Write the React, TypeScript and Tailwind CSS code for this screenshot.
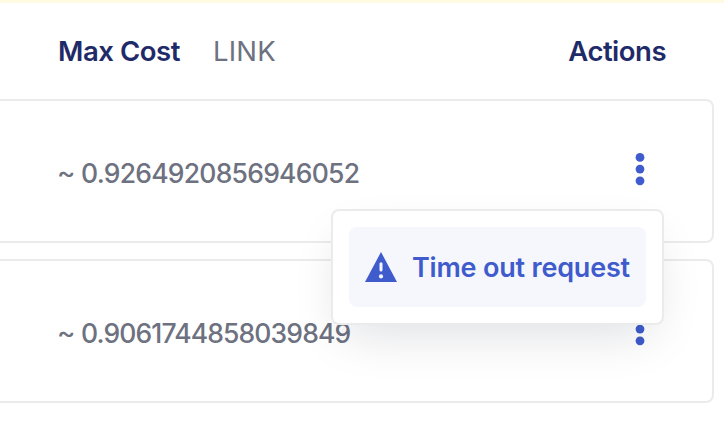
function Dots() {
  return (
    <svg width="10" height="33" viewBox="0 0 10 33" className="mb-1 shrink-0" fill="#3f5bcc">
      <circle cx="5" cy="4.4" r="4.4" />
      <circle cx="5" cy="16.1" r="4.4" />
      <circle cx="5" cy="27.8" r="4.4" />
    </svg>
  );
}

function Menu() {
  return (
    <div className="absolute top-[108px] right-[48px] z-10 h-[116px] w-[333px] rounded-lg border-2 border-[#ebebeb] bg-white p-4 shadow-[0_20px_50px_-12px_rgba(10,20,40,0.14)]">
      <button className="flex h-20 w-[297px] items-center rounded-lg bg-[#f5f7fd] pl-4 text-[#3f5bcc]">
        <svg width="32" height="30" viewBox="0 0 32 30" className="mr-[15px] shrink-0">
          <path d="M16 0 32 30H0Z" fill="#3f5bcc" />
          <rect x="14.5" y="10.2" width="3" height="9.3" rx="1.5" fill="#f5f7fd" />
          <circle cx="16" cy="24.4" r="2.1" fill="#f5f7fd" />
        </svg>
        <span className="pt-0.5 text-[27px] leading-8 font-semibold tracking-[-0.2px] whitespace-nowrap">
          Time out request
        </span>
      </button>
    </div>
  );
}

function Row({ cost, tracking, open = false }: { cost: string; tracking: string; open?: boolean }) {
  return (
    <div className="relative flex h-36 w-[714px] items-center justify-between rounded-r-lg border-2 border-l-0 border-[#ebebeb] pr-[67px] pl-[57px]">
      <div className="flex pt-[3px] text-[26.5px] leading-8 font-medium text-[#6d7180]">
        <span className="w-6 origin-left scale-x-115 text-[24px]">~</span>
        <span className={tracking}>{cost}</span>
      </div>
      <Dots />
      {open && <Menu />}
    </div>
  );
}

export default function App() {
  return (
    <main className="h-[425px] w-[724px] overflow-hidden bg-white font-['Inter','Liberation_Sans',sans-serif]">
      <div className="h-[3px] bg-[#fffbe3]" />
      <header className="flex h-24 w-[714px] items-center pr-12 pl-[58px] text-[27.5px] leading-8 font-semibold text-[#1f2b69]">
        <span className="w-[155px] tracking-[-0.45px]">Max Cost</span>
        <span className="font-normal tracking-[0.2px] text-[#6d7180]">LINK</span>
        <span className="ml-auto tracking-[-0.5px]">Actions</span>
      </header>
      <div className="flex flex-col gap-4">
        <Row cost="0.9264920856946052" tracking="tracking-[-0.75px]" open />
        <Row cost="0.9061744858039849" tracking="tracking-[-0.87px]" />
      </div>
    </main>
  );
}
